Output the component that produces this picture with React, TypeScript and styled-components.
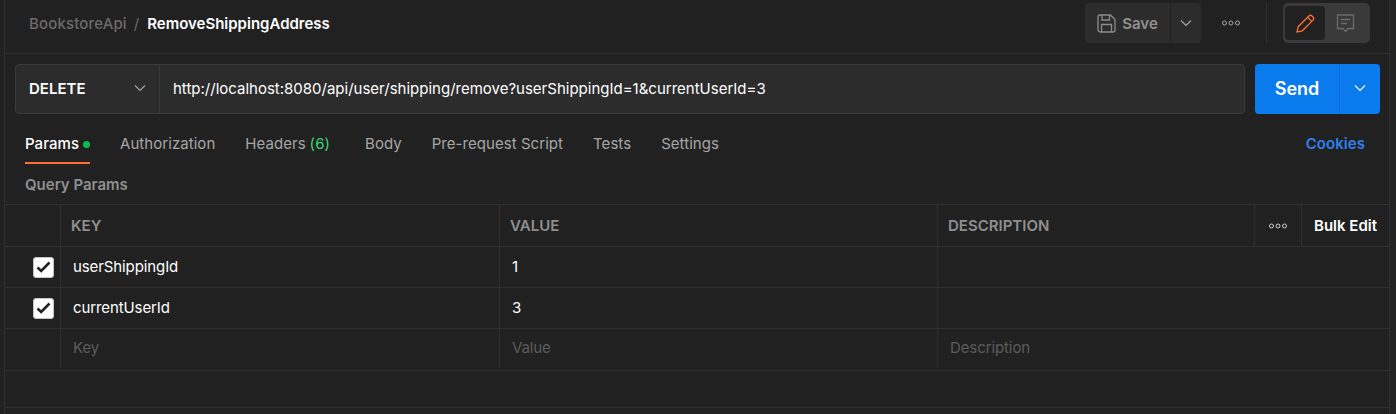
import React from 'react';
import styled, { createGlobalStyle } from 'styled-components';

const GlobalStyle = createGlobalStyle`
  html, body {
    margin: 0;
    padding: 0;
    background: #212121;
  }
  * {
    box-sizing: border-box;
  }
`;

type ParamRow = { key: string; value: string };

const PARAMS: ParamRow[] = [
  { key: 'userShippingId', value: '1' },
  { key: 'currentUserId', value: '3' },
];

const TABS = ['Authorization', 'Headers', 'Body', 'Pre-request Script', 'Tests', 'Settings'];

const Chevron = ({ color = '#a6a6a6' }: { color?: string }) => (
  <svg width="12" height="8" viewBox="0 0 12 8" fill="none">
    <path d="M1 1.500 6 6.500 11 1.500" stroke={color} strokeWidth="1.100" />
  </svg>
);

const Dots = ({ color = '#a6a6a6' }: { color?: string }) => (
  <svg width="18" height="6" viewBox="0 0 18 6" fill="none" stroke={color} strokeWidth="1">
    <circle cx="2.500" cy="3" r="2" />
    <circle cx="9" cy="3" r="2" />
    <circle cx="15.500" cy="3" r="2" />
  </svg>
);

const App: React.FC = () => {
  return (
    <>
      <GlobalStyle />
      <Page>
        <Main>
          <Header>
            <Crumbs>
              <CrumbParent>BookstoreApi</CrumbParent>
              <CrumbSlash>/</CrumbSlash>
              <CrumbName>RemoveShippingAddress</CrumbName>
            </Crumbs>
            <Actions>
              <SaveGroup>
                <SaveButton>
                  <svg width="19" height="19" viewBox="0 0 19 19" fill="none" stroke="#8c8c8c" strokeWidth="1.300">
                    <path d="M1 3a2 2 0 0 1 2-2h10.500L18 5.500V16a2 2 0 0 1-2 2H3a2 2 0 0 1-2-2z" />
                    <path d="M5 1v5h7.500V1M4.500 18v-7.500h10V18" />
                  </svg>
                  Save
                </SaveButton>
                <SaveCaret>
                  <Chevron />
                </SaveCaret>
              </SaveGroup>
              <MoreButton>
                <Dots />
              </MoreButton>
              <ActionDivider />
              <ModeSwitch>
                <ModeButton $active>
                  <svg width="19" height="19" viewBox="0 0 19 19" fill="none" stroke="#ff6c37" strokeWidth="1.300">
                    <path d="M1 18l1.200-5.300L12.900 2a2.200 2.200 0 0 1 3.100 0l1 1a2.200 2.200 0 0 1 0 3.100L6.300 16.800z" />
                    <path d="M11.600 3.300l4.100 4.100" />
                  </svg>
                </ModeButton>
                <ModeButton>
                  <svg width="19" height="19" viewBox="0 0 19 19" fill="none" stroke="#6b6b6b" strokeWidth="1.300">
                    <path d="M1.500 1h16v13.500h-5.500L9.500 17.500 7 14.500H1.500z" />
                    <path d="M5 5.500h9M5 9.500h6" />
                  </svg>
                </ModeButton>
              </ModeSwitch>
            </Actions>
          </Header>

          <RequestBar>
            <UrlGroup>
              <MethodSelect>
                DELETE
                <Chevron />
              </MethodSelect>
              <UrlInput>http://localhost:8080/api/user/shipping/remove?userShippingId=1&amp;currentUserId=3</UrlInput>
            </UrlGroup>
            <SendGroup>
              <SendButton>Send</SendButton>
              <SendCaret>
                <Chevron color="#ffffff" />
              </SendCaret>
            </SendGroup>
          </RequestBar>

          <TabBar>
            <ActiveTab>
              Params
              <GreenDot />
            </ActiveTab>
            {TABS.map((tab) => (
              <Tab key={tab}>
                {tab}
                {tab === 'Headers' && <TabCount>(6)</TabCount>}
              </Tab>
            ))}
            <CookiesLink>Cookies</CookiesLink>
          </TabBar>

          <SectionTitle>Query Params</SectionTitle>

          <Table>
            <HeadRow>
              <CheckCell />
              <HeadCell>KEY</HeadCell>
              <HeadCell>VALUE</HeadCell>
              <HeadCell>DESCRIPTION</HeadCell>
              <HeadTool>
                <Dots color="#d0d0d0" />
              </HeadTool>
              <BulkEdit>Bulk Edit</BulkEdit>
            </HeadRow>
            {PARAMS.map((row) => (
              <BodyRow key={row.key}>
                <CheckCell>
                  <CheckBox>
                    <svg width="15" height="12" viewBox="0 0 15 12" fill="none">
                      <path d="M1.500 6.500 5.200 10 13.500 1.500" stroke="#212121" strokeWidth="2.600" />
                    </svg>
                  </CheckBox>
                </CheckCell>
                <BodyCell>{row.key}</BodyCell>
                <BodyCell>{row.value}</BodyCell>
                <BodyCell $wide />
              </BodyRow>
            ))}
            <LastRow>
              <CheckCell />
              <BodyCell $placeholder>Key</BodyCell>
              <BodyCell $placeholder>Value</BodyCell>
              <BodyCell $placeholder $wide>
                Description
              </BodyCell>
            </LastRow>
          </Table>
          <BottomRule />
        </Main>
      </Page>
    </>
  );
};

export default App;

const Page = styled.div`
  width: 1396px;
  height: 414px;
  overflow: hidden;
  background: #212121;
  padding: 0 6px 0 4px;
  font-family: Inter, 'Noto Sans', sans-serif;
  color: #ffffff;
`;

const Main = styled.div`
  height: 100%;
  border-left: 1px solid #303030;
  border-right: 1px solid #303030;
  display: flex;
  flex-direction: column;
`;

const Header = styled.div`
  height: 54px;
  flex-shrink: 0;
  border-bottom: 1px solid #303030;
  display: flex;
  align-items: center;
  justify-content: space-between;
  padding: 0 19px 7px 24px;
`;

const Crumbs = styled.div`
  display: flex;
  align-items: center;
  font-size: 15px;
`;

const CrumbParent = styled.span`
  color: #6b6b6b;
  font-weight: 500;
  letter-spacing: 0.15px;
`;

const CrumbSlash = styled.span`
  color: #6b6b6b;
  margin: 0 8px 0 7px;
`;

const CrumbName = styled.span`
  color: #ffffff;
  font-weight: 600;
`;

const Actions = styled.div`
  display: flex;
  align-items: center;
`;

const SaveGroup = styled.div`
  display: flex;
  height: 40px;
  gap: 1px;
`;

const SaveButton = styled.div`
  width: 85px;
  display: flex;
  align-items: center;
  justify-content: center;
  gap: 6px;
  background: #2c2c2c;
  border-radius: 4px 0 0 4px;
  color: #919191;
  font-size: 15px;
  font-weight: 600;
`;

const SaveCaret = styled.div`
  width: 30px;
  display: flex;
  align-items: center;
  justify-content: center;
  background: #2c2c2c;
  border-radius: 0 4px 4px 0;
`;

const MoreButton = styled.div`
  width: 65px;
  padding-right: 5px;
  display: flex;
  align-items: center;
  justify-content: center;
`;

const ActionDivider = styled.div`
  width: 1px;
  height: 40px;
  background: #303030;
  margin-right: 16px;
`;

const ModeSwitch = styled.div`
  width: 87px;
  height: 40px;
  background: #3a3a3a;
  border-radius: 5px;
  padding: 3px 2px;
  display: flex;
`;

const ModeButton = styled.div<{ $active?: boolean }>`
  width: 40px;
  display: flex;
  align-items: center;
  justify-content: center;
  background: ${({ $active }) => ($active ? '#212121' : 'transparent')};
  border-radius: 4px;
`;

const RequestBar = styled.div`
  display: flex;
  gap: 10px;
  padding: 10px 9px 0 10px;
  flex-shrink: 0;
`;

const UrlGroup = styled.div`
  flex: 1;
  height: 50px;
  display: flex;
  background: #2c2c2c;
  border: 1px solid #3a3a3a;
  border-radius: 4px;
`;

const MethodSelect = styled.div`
  width: 144px;
  flex-shrink: 0;
  display: flex;
  align-items: center;
  justify-content: space-between;
  padding: 0 13px 2px 13px;
  border-right: 1px solid #3a3a3a;
  font-size: 15px;
  font-weight: 600;
`;

const UrlInput = styled.div`
  display: flex;
  align-items: center;
  padding: 0 0 2px 13px;
  font-size: 15px;
  color: #ffffff;
`;

const SendGroup = styled.div`
  width: 125px;
  height: 50px;
  display: flex;
  border-radius: 4px;
  overflow: hidden;
  background: #097bed;
`;

const SendButton = styled.div`
  width: 85px;
  display: flex;
  align-items: center;
  justify-content: center;
  padding-bottom: 2px;
  font-size: 18px;
  font-weight: 600;
  border-right: 1px solid #0a6fd6;
`;

const SendCaret = styled.div`
  flex: 1;
  display: flex;
  align-items: center;
  justify-content: center;
  padding-bottom: 2px;
`;

const TabBar = styled.div`
  display: flex;
  align-items: flex-start;
  gap: 30px;
  height: 49px;
  padding: 10px 24px 0 20px;
  flex-shrink: 0;
  font-size: 15px;
  letter-spacing: 0.05px;
`;

const Tab = styled.div`
  height: 40px;
  line-height: 20px;
  padding-top: 10px;
  color: #a6a6a6;
  white-space: nowrap;
`;

const ActiveTab = styled(Tab)`
  color: #ffffff;
  font-weight: 500;
  border-bottom: 2px solid #ff6c37;
  display: flex;
  align-items: flex-start;
  gap: 4px;
`;

const GreenDot = styled.span`
  width: 7px;
  height: 7px;
  margin-top: 7px;
  border-radius: 50%;
  background: #0cbb52;
`;

const TabCount = styled.span`
  color: #3fd47a;
  margin-left: 4px;
  margin-right: 5px;
`;

const CookiesLink = styled.div`
  margin-left: auto;
  padding-top: 10px;
  line-height: 20px;
  color: #2f80ed;
  font-weight: 600;
`;

const SectionTitle = styled.div`
  height: 41px;
  flex-shrink: 0;
  padding: 12px 0 0 20px;
  font-size: 15px;
  line-height: 20px;
  font-weight: 600;
  color: #8f8f8f;
`;

const Table = styled.div`
  border-top: 1px solid #303030;
  flex-shrink: 0;
`;

const Columns = styled.div`
  display: grid;
  grid-template-columns: 56px 439px 438px 317px 47px 1fr;
  border-bottom: 1px solid #303030;
`;

const HeadRow = styled(Columns)`
  height: 42px;
`;

const BodyRow = styled(Columns)`
  height: 41px;
`;

const LastRow = styled(Columns)`
  height: 42px;
  padding-bottom: 2px;
`;

const CheckCell = styled.div`
  border-right: 1px solid #303030;
  display: flex;
  align-items: center;
  justify-content: center;
  padding-left: 22px;
`;

const HeadCell = styled.div`
  display: flex;
  align-items: center;
  padding-left: 10px;
  border-right: 1px solid #303030;
  font-size: 15px;
  font-weight: 600;
  color: #8f8f8f;
`;

const HeadTool = styled.div`
  display: flex;
  align-items: center;
  justify-content: center;
  border-right: 1px solid #303030;
`;

const BulkEdit = styled.div`
  display: flex;
  align-items: center;
  justify-content: center;
  font-size: 15px;
  font-weight: 600;
  white-space: nowrap;
`;

const BodyCell = styled.div<{ $placeholder?: boolean; $wide?: boolean }>`
  display: flex;
  align-items: center;
  padding: 0 0 2px 12px;
  font-size: 15px;
  letter-spacing: -0.1px;
  color: ${({ $placeholder }) => ($placeholder ? '#5c5c5c' : '#ffffff')};
  border-right: 1px solid #303030;
  ${({ $wide }) => ($wide ? 'grid-column: 4 / -1; border-right: 0;' : '')}
`;

const CheckBox = styled.div`
  width: 21px;
  height: 21px;
  flex-shrink: 0;
  border-radius: 4px;
  background: #ffffff;
  box-shadow: inset 0 0 0 1px #c4c4c4;
  display: flex;
  align-items: center;
  justify-content: center;
`;

const BottomRule = styled.div`
  margin-top: 36px;
  border-top: 1px solid #303030;
`;
